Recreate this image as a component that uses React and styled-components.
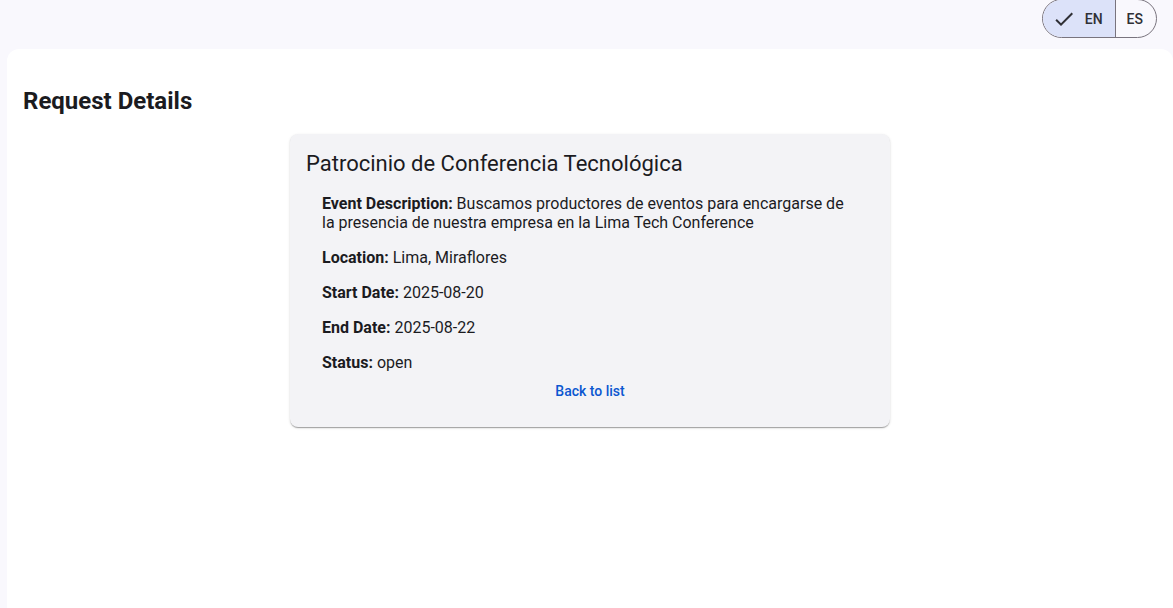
import React from "react";
import styled, { createGlobalStyle } from "styled-components";

const GlobalStyle = createGlobalStyle`
  html, body {
    margin: 0;
    padding: 0;
    background: #f9f8fd;
    font-family: Roboto, "Liberation Sans", sans-serif;
    color: #1b1b1f;
  }
  #root {
    min-height: 100vh;
    display: flex;
    flex-direction: column;
  }
`;

const Page = styled.div`
  flex: 1;
  display: flex;
  flex-direction: column;
`;

const TopBar = styled.header`
  height: 49px;
  display: flex;
  justify-content: flex-end;
  align-items: flex-start;
  padding-right: 16px;
`;

const Toggle = styled.div`
  display: flex;
  height: 39px;
  margin-top: -1px;
  border: 1px solid #79747e;
  border-radius: 20px;
  overflow: hidden;
  box-sizing: border-box;
`;

const ToggleButton = styled.button`
  display: flex;
  align-items: center;
  gap: 9px;
  border: none;
  background: ${p => (p.$active ? "#dce2f9" : "transparent")};
  color: #303036;
  font-family: Roboto, "Liberation Sans", sans-serif;
  font-weight: 500;
  font-size: 14px;
  padding: ${p => (p.$active ? "0 12px 0 9px" : "0 13px 0 11px")};
  border-left: ${p => (p.$first ? "none" : "1px solid #79747e")};
  cursor: pointer;
`;

const Panel = styled.main`
  flex: 1;
  background: #ffffff;
  margin-left: 7px;
  border-radius: 12px 12px 0 0;
  padding: 38px 16px 24px 16px;
`;

const Heading = styled.h1`
  margin: 0 0 19px 0;
  font-size: 24px;
  font-weight: 700;
  line-height: 28px;
  color: #1b1b1f;
`;

const Card = styled.section`
  width: 600px;
  box-sizing: border-box;
  margin: 0 auto;
  background: #f3f3f6;
  border-radius: 8px;
  padding: 16px 16px 26px 16px;
  box-shadow: 0 2px 1px -1px rgba(0, 0, 0, 0.2), 0 1px 1px 0 rgba(0, 0, 0, 0.14),
    0 1px 3px 0 rgba(0, 0, 0, 0.12);
`;

const CardTitle = styled.h2`
  margin: 0 0 16px 0;
  font-size: 22px;
  font-weight: 400;
  line-height: 28px;
`;

const Body = styled.div`
  padding: 0 16px;
`;

const Field = styled.p`
  margin: 0 0 16px 0;
  font-size: 16px;
  line-height: 19px;
  b {
    font-weight: 700;
  }
`;

const Actions = styled.div`
  display: flex;
  justify-content: center;
  margin-top: -7px;
`;

const LinkButton = styled.a`
  font-size: 14px;
  font-weight: 500;
  color: #0b57d0;
  text-decoration: none;
  line-height: 20px;
  padding: 0 8px;
  cursor: pointer;
`;

const Check = () => (
  <svg width="24" height="24" viewBox="0 0 24 24">
    <path d="M9 16.17 4.83 12l-1.42 1.41L9 19 21 7l-1.41-1.41z" fill="#303036" />
  </svg>
);

const fields = [
  {
    label: "Event Description:",
    value:
      "Buscamos productores de eventos para encargarse de la presencia de nuestra empresa en la Lima Tech Conference",
  },
  { label: "Location:", value: "Lima, Miraflores" },
  { label: "Start Date:", value: "2025-08-20" },
  { label: "End Date:", value: "2025-08-22" },
  { label: "Status:", value: "open" },
];

const App = () => (
  <>
    <GlobalStyle />
    <Page>
      <TopBar>
        <Toggle>
          <ToggleButton $active $first>
            <Check />
            EN
          </ToggleButton>
          <ToggleButton>ES</ToggleButton>
        </Toggle>
      </TopBar>
      <Panel>
        <Heading>Request Details</Heading>
        <Card>
          <CardTitle>Patrocinio de Conferencia Tecnológica</CardTitle>
          <Body>
            {fields.map(f => (
              <Field key={f.label}>
                <b>{f.label}</b> {f.value}
              </Field>
            ))}
          </Body>
          <Actions>
            <LinkButton>Back to list</LinkButton>
          </Actions>
        </Card>
      </Panel>
    </Page>
  </>
);

export default App;
